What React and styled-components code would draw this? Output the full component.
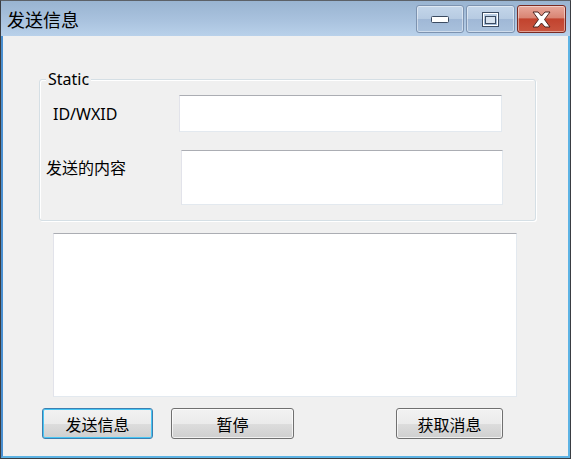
import React from "react";
import styled, { createGlobalStyle } from "styled-components";

const GlobalStyle = createGlobalStyle`
    html, body {
        margin: 0;
        padding: 0;
        background: #f0f0f0;
    }
`;

const UI_FONT = `"Noto Sans", "Noto Sans CJK SC", sans-serif`;
const CJK_FONT = `"Noto Sans CJK SC", "Noto Sans", sans-serif`;

const Window = styled.div`
    width: 571px;
    height: 459px;
    box-sizing: border-box;
    border: 1px solid #3a3d42;
    border-top-color: #5c6168;
    display: flex;
    flex-direction: column;
    background: #b9d1ea;
`;

const TitleBar = styled.div`
    height: 35px;
    flex-shrink: 0;
    display: flex;
    align-items: flex-start;
    justify-content: space-between;
    background: linear-gradient(to bottom, #99b4d1 0%, #a9c2de 55%, #b9d1ea 100%);
    padding: 0 4px 0 6px;
`;

const Title = styled.span`
    font-family: ${CJK_FONT};
    font-size: 18px;
    line-height: 22px;
    margin-top: 7px;
    color: #000;
`;

const CaptionButtons = styled.div`
    display: flex;
    gap: 2px;
    margin-top: 4px;
`;

const CaptionButton = styled.div`
    width: ${(p) => p.$w}px;
    height: 28px;
    box-sizing: border-box;
    border: 1px solid ${(p) => (p.$close ? "#7a2a22" : "#7d93b0")};
    border-radius: 3px;
    display: flex;
    align-items: center;
    justify-content: center;
    background: ${(p) =>
        p.$close
            ? "linear-gradient(to bottom, #e8a89b 0%, #d98574 45%, #c2432e 50%, #c9553f 100%)"
            : "linear-gradient(to bottom, #c4d6ea 0%, #b7cbe2 48%, #a0b8d6 52%, #a9c1dc 100%)"};
    box-shadow: inset 0 0 0 1px rgba(255, 255, 255, 0.45);
`;

const Client = styled.div`
    flex: 1;
    display: flex;
    flex-direction: column;
    background: #f0f0f0;
    border: 2px solid #5db3e4;
    border-top: none;
    border-left-color: #4a8fd0;
`;

const GroupBox = styled.div`
    position: relative;
    margin: 43px 0 0 36px;
    width: 497px;
    height: 142px;
    box-sizing: border-box;
    border: 1px solid #d5dfe5;
    border-radius: 3px;
    box-shadow: inset 1px 1px 0 #fff, 1px 1px 0 #fff;
    display: flex;
    flex-direction: column;
    padding-top: 15px;
    gap: 18px;
`;

const Legend = styled.span`
    position: absolute;
    left: 6px;
    top: -12px;
    padding: 0 2px;
    background: #f0f0f0;
    font-family: ${UI_FONT};
    font-size: 16px;
    line-height: 22px;
    color: #000;
`;

const FieldRow = styled.div`
    display: flex;
    align-items: ${(p) => (p.$top ? "flex-start" : "center")};
    padding-left: ${(p) => p.$indent}px;
`;

const FieldLabel = styled.span`
    width: ${(p) => p.$w}px;
    flex-shrink: 0;
    font-family: ${(p) => (p.$cjk ? CJK_FONT : UI_FONT)};
    font-size: 16px;
    line-height: 20px;
    padding-top: ${(p) => p.$pt || 0}px;
    color: #000;
`;

const EditBox = styled.div`
    width: ${(p) => p.$w}px;
    height: ${(p) => p.$h}px;
    box-sizing: border-box;
    background: #fff;
    border: 1px solid #e3e9ef;
    border-top-color: #abadb3;
    border-left-color: #e2e3ea;
`;

const ListBox = styled(EditBox)`
    margin: 12px 0 0 50px;
`;

const ButtonRow = styled.div`
    display: flex;
    margin: 11px 0 0 39px;
`;

const Button = styled.button`
    width: ${(p) => p.$w}px;
    height: 31px;
    margin-left: ${(p) => p.$gap || 0}px;
    box-sizing: border-box;
    padding: 0;
    border: 1px solid ${(p) => (p.$default ? "#3c7fb1" : "#707070")};
    border-radius: 3px;
    background: linear-gradient(to bottom, #f2f2f2 0%, #ebebeb 50%, #dddddd 51%, #cfcfcf 100%);
    box-shadow: inset 0 0 0 1px ${(p) => (p.$default ? "#48c6f4" : "rgba(255,255,255,0.7)")};
    font-family: ${CJK_FONT};
    font-size: 16px;
    color: #000;
    line-height: 20px;
`;

function MinimizeIcon() {
    return (
        <svg width="18" height="7" viewBox="0 0 18 7">
            <rect x="0.5" y="0.5" width="17" height="6" rx="1" fill="#fff" stroke="#3b4b61" />
        </svg>
    );
}

function MaximizeIcon() {
    return (
        <svg width="17" height="15" viewBox="0 0 17 15">
            <rect x="0.5" y="0.5" width="16" height="14" fill="none" stroke="#3b4b61" />
            <rect x="1.5" y="1.5" width="14" height="12" fill="none" stroke="#fff" />
            <rect x="3.5" y="4.5" width="10" height="7" fill="#d8e3ef" stroke="#3b4b61" />
        </svg>
    );
}

function CloseIcon() {
    return (
        <svg width="19" height="17" viewBox="0 0 19 17">
            <path
                d="M1 1 H6 L9.5 5 L13 1 H18 L12.5 8.5 L18 16 H13 L9.5 12 L6 16 H1 L6.5 8.5 Z"
                fill="#fff"
                stroke="#4a2420"
                strokeWidth="1"
                strokeLinejoin="round"
            />
        </svg>
    );
}

export default function App() {
    return (
        <>
            <GlobalStyle />
            <Window>
                <TitleBar>
                    <Title>发送信息</Title>
                    <CaptionButtons>
                        <CaptionButton $w={48}>
                            <MinimizeIcon />
                        </CaptionButton>
                        <CaptionButton $w={49}>
                            <MaximizeIcon />
                        </CaptionButton>
                        <CaptionButton $w={49} $close>
                            <CloseIcon />
                        </CaptionButton>
                    </CaptionButtons>
                </TitleBar>

                <Client>
                    <GroupBox>
                        <Legend>Static</Legend>
                        <FieldRow $indent={13}>
                            <FieldLabel $w={126}>ID/WXID</FieldLabel>
                            <EditBox $w={323} $h={37} />
                        </FieldRow>
                        <FieldRow $indent={6} $top>
                            <FieldLabel $w={135} $cjk $pt={7}>发送的内容</FieldLabel>
                            <EditBox $w={322} $h={55} />
                        </FieldRow>
                    </GroupBox>

                    <ListBox $w={464} $h={164} />

                    <ButtonRow>
                        <Button $w={111} $default>发送信息</Button>
                        <Button $w={123} $gap={18}>暂停</Button>
                        <Button $w={107} $gap={102}>获取消息</Button>
                    </ButtonRow>
                </Client>
            </Window>
        </>
    );
}
